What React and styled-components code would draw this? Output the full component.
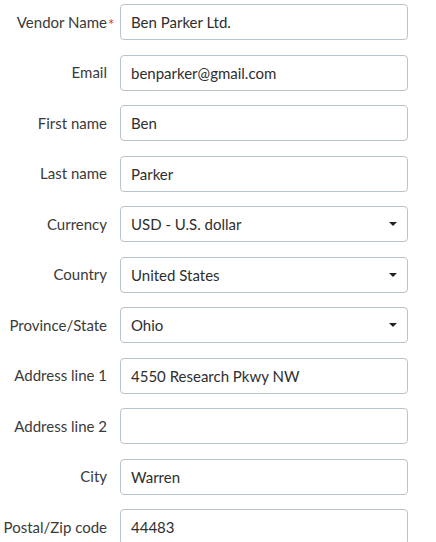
import React from "react";
import styled, { createGlobalStyle } from "styled-components";

const Global = createGlobalStyle`
  html, body { margin: 0; padding: 0; background: #fff; }
  body { font-family: Lato, "Noto Sans", sans-serif; color: #333; }
`;

const Form = styled.div`
  display: grid;
  grid-template-columns: 107px 288px;
  column-gap: 13px;
  row-gap: 14.5px;
  padding-top: 4px;
  align-items: center;
`;

const Label = styled.label`
  position: relative;
  text-align: right;
  font-size: 15px;
  color: #3a3a3a;
  white-space: nowrap;
  margin-top: -1px;
`;

const Req = styled.span`
  position: absolute;
  left: 100%;
  top: 2px;
  margin-left: 1px;
  color: #d6304f;
  font-size: 15px;
`;

const Field = styled.div`
  position: relative;
  box-sizing: border-box;
  height: 36px;
  border: 1px solid #b9c3cd;
  border-radius: 4px;
  display: flex;
  align-items: center;
  padding: 0 10px;
  font-size: 15px;
  color: #2e2e2e;
  background: #fff;
`;

const Value = styled.span`
  flex: 1;
  white-space: nowrap;
`;

const Caret = styled.span`
  width: 0;
  height: 0;
  border-left: 4.5px solid transparent;
  border-right: 4.5px solid transparent;
  border-top: 4.5px solid #222;
`;

const rows = [
  { label: "Vendor Name", value: "Ben Parker Ltd.", required: true },
  { label: "Email", value: "benparker@gmail.com" },
  { label: "First name", value: "Ben" },
  { label: "Last name", value: "Parker" },
  { label: "Currency", value: "USD - U.S. dollar", select: true },
  { label: "Country", value: "United States", select: true },
  { label: "Province/State", value: "Ohio", select: true },
  { label: "Address line 1", value: "4550 Research Pkwy NW" },
  { label: "Address line 2", value: "" },
  { label: "City", value: "Warren" },
  { label: "Postal/Zip code", value: "44483" },
];

export default function App() {
  return (
    <>
      <Global />
      <Form>
        {rows.map((r) => (
          <React.Fragment key={r.label}>
            <Label>
              {r.label}
              {r.required && <Req>*</Req>}
            </Label>
            <Field>
              <Value>{r.value}</Value>
              {r.select && <Caret />}
            </Field>
          </React.Fragment>
        ))}
      </Form>
    </>
  );
}
